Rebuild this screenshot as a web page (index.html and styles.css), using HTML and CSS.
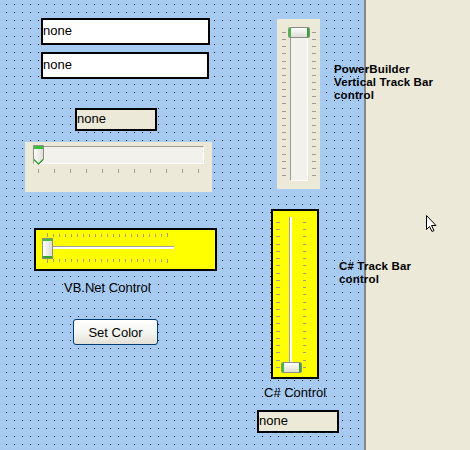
FILE: index.html
```html
<!DOCTYPE html>
<html lang="en">
<head>
  <meta charset="UTF-8" />
  <title>Track Bar controls</title>
  <link rel="stylesheet" href="styles.css">
</head>
<body>
  <div class="canvas">
    <div class="col-left">
      <div class="field field-one">none</div>
      <div class="field field-two">none</div>
      <div class="static static-top">none</div>

      <!-- PowerBuilder horizontal track bar -->
      <div class="pb-hbar">
        <svg width="187" height="50" viewBox="0 0 187 50">
          <defs>
            <linearGradient id="hthumb" x1="0" x2="1" y1="0" y2="0">
              <stop offset="0" stop-color="#ffffff"/>
              <stop offset="1" stop-color="#dcdbd3"/>
            </linearGradient>
          </defs>
          <rect x="8.5" y="4.5" width="170" height="17" fill="#f2f1eb" stroke="#ffffff"/>
          <path d="M8.5 21.5V4.5H178.5" fill="none" stroke="#9d9c94"/>
          <path d="M13.5 27v4M29.5 27v4M45.5 27v4M61.5 27v4M77.5 27v4M93.5 27v4M109.5 27v4M125.5 27v4M141.5 27v4M157.5 27v4M173.5 27v4" stroke="#9d9c94"/>
          <path d="M8.5 3.5h10v14l-5 5-5-5z" fill="url(#hthumb)" stroke="#8c8d88"/>
          <rect x="9" y="4" width="9" height="3" fill="#3cbf3c"/>
          <path d="M9 17.5l4.5 4.5 4.5-4.5" fill="none" stroke="#2fa52f" stroke-width="1.2"/>
        </svg>
      </div>

      <!-- VB.Net track bar -->
      <div class="vb-bar">
        <svg width="179" height="39" viewBox="0 0 179 39">
          <defs>
            <linearGradient id="vbthumb" x1="0" x2="1" y1="0" y2="0">
              <stop offset="0" stop-color="#ffffff"/>
              <stop offset="1" stop-color="#dcdbd3"/>
            </linearGradient>
          </defs>
          <path d="M11 16.5H138" stroke="#a0a0a0"/>
          <rect x="11" y="17" width="127" height="2" fill="#ffffff"/>
          <g stroke="#a09f8c">
            <path d="M11.5 3v4M131.5 3v4M11.5 29v4M131.5 29v4"/>
            <path d="M17.5 4v3M23.5 4v3M29.5 4v3M35.5 4v3M41.5 4v3M47.5 4v3M53.5 4v3M59.5 4v3M65.5 4v3M71.5 4v3M77.5 4v3M83.5 4v3M89.5 4v3M95.5 4v3M101.5 4v3M107.5 4v3M113.5 4v3M119.5 4v3M125.5 4v3"/>
            <path d="M17.5 29v3M23.5 29v3M29.5 29v3M35.5 29v3M41.5 29v3M47.5 29v3M53.5 29v3M59.5 29v3M65.5 29v3M71.5 29v3M77.5 29v3M83.5 29v3M89.5 29v3M95.5 29v3M101.5 29v3M107.5 29v3M113.5 29v3M119.5 29v3M125.5 29v3"/>
          </g>
          <rect x="6.5" y="8.5" width="10" height="20" fill="url(#vbthumb)" stroke="#8c8d88"/>
          <rect x="7" y="9" width="9" height="2" fill="#3cbf3c"/>
          <rect x="7" y="26" width="9" height="2" fill="#2fa52f"/>
        </svg>
      </div>
      <div class="caption caption-vb">VB.Net Control</div>

      <button class="xp-button">Set Color</button>
    </div>

    <div class="col-right">
      <div class="row row-pb">
        <!-- PowerBuilder vertical track bar -->
        <div class="pb-vbar">
          <svg width="43" height="170" viewBox="0 0 43 170">
            <defs>
              <linearGradient id="pbthumb" x1="0" x2="0" y1="0" y2="1">
                <stop offset="0" stop-color="#ffffff"/>
                <stop offset="1" stop-color="#dcdbd3"/>
              </linearGradient>
            </defs>
            <rect x="13.5" y="9.5" width="17" height="152" fill="#f2f1eb" stroke="#ffffff"/>
            <path d="M13.5 161.5V9.5H30.5" fill="none" stroke="#9d9c94"/>
            <path stroke="#9d9c94" d="M5 13.5h4M5 20.5h4M5 27.5h4M5 34.5h4M5 42.5h4M5 49.5h4M5 56.5h4M5 63.5h4M5 70.5h4M5 77.5h4M5 84.5h4M5 92.5h4M5 99.5h4M5 106.5h4M5 113.5h4M5 120.5h4M5 127.5h4M5 135.5h4M5 142.5h4M5 149.5h4M5 156.5h4"/>
            <path stroke="#9d9c94" d="M35 13.5h4M35 20.5h4M35 27.5h4M35 34.5h4M35 42.5h4M35 49.5h4M35 56.5h4M35 63.5h4M35 70.5h4M35 77.5h4M35 84.5h4M35 92.5h4M35 99.5h4M35 106.5h4M35 113.5h4M35 120.5h4M35 127.5h4M35 135.5h4M35 142.5h4M35 149.5h4M35 156.5h4"/>
            <rect x="11.5" y="8.5" width="21" height="10" rx="1" fill="url(#pbthumb)" stroke="#8c8d88"/>
            <rect x="12" y="9" width="2" height="9" fill="#3cbf3c"/>
            <rect x="30" y="9" width="2" height="9" fill="#2fa52f"/>
          </svg>
        </div>
        <div class="note note-pb">PowerBuilder<br>Vertical Track Bar<br>control</div>
      </div>

      <div class="row row-cs">
        <!-- C# track bar -->
        <div class="cs-bar">
          <svg width="44" height="166" viewBox="0 0 44 166">
            <defs>
              <linearGradient id="csthumb" x1="0" x2="0" y1="0" y2="1">
                <stop offset="0" stop-color="#ffffff"/>
                <stop offset="1" stop-color="#dcdbd3"/>
              </linearGradient>
            </defs>
            <path d="M16.5 6V154" stroke="#a0a0a0"/>
            <rect x="17" y="6" width="2" height="148" fill="#ffffff"/>
            <path stroke="#a09f8c" d="M3 11.5h4M3 18.5h4M3 25.5h4M3 33.5h4M3 40.5h4M3 47.5h4M3 54.5h4M3 62.5h4M3 69.5h4M3 76.5h4M3 83.5h4M3 91.5h4M3 98.5h4M3 105.5h4M3 112.5h4M3 120.5h4M3 127.5h4M3 134.5h4M3 141.5h4M3 149.5h4M3 156.5h4"/>
            <path stroke="#a09f8c" d="M30 11.5h3M30 18.5h3M30 25.5h3M30 33.5h3M30 40.5h3M30 47.5h3M30 54.5h3M30 62.5h3M30 69.5h3M30 76.5h3M30 83.5h3M30 91.5h3M30 98.5h3M30 105.5h3M30 112.5h3M30 120.5h3M30 127.5h3M30 134.5h3M30 141.5h3M30 149.5h3M30 156.5h3"/>
            <rect x="8.5" y="151.5" width="20" height="10" rx="1" fill="url(#csthumb)" stroke="#8c8d88"/>
            <rect x="9" y="152" width="2" height="9" fill="#3cbf3c"/>
            <rect x="26" y="152" width="2" height="9" fill="#2fa52f"/>
          </svg>
        </div>
        <div class="note note-cs">C# Track Bar<br>control</div>
      </div>
      <div class="caption caption-cs">C# Control</div>
      <div class="static static-bottom">none</div>
    </div>
  </div>

  <svg class="pointer" width="12" height="18" viewBox="0 0 12 18">
    <path d="M0.5 0.5V14.5L3.5 11.5L6 16.5L8 15.5L5.5 10.5H10Z" fill="#ffffff" stroke="#000000" stroke-linejoin="miter"/>
  </svg>
</body>
</html>
```

FILE: styles.css
```css
body {
  margin: 0;
  width: 470px;
  height: 450px;
  overflow: hidden;
  position: relative;
  background-color: #ece9d8;
  font-family: "Liberation Sans", Arial, sans-serif;
  font-size: 13px;
  color: #000;
}

/* design surface with the 8px dot grid */
.canvas {
  display: flex;
  width: 364px;
  height: 450px;
  border-right: 2px solid #878787;
  background-color: #a6caf0;
  background-image: conic-gradient(at 1px 1px, transparent 75%, #000 0);
  background-size: 8px 8px;
  background-position: 6px 4px;
}

.col-left {
  flex: none;
  width: 240px;
  display: flex;
  flex-direction: column;
  align-items: flex-start;
}

.col-right {
  flex: none;
  margin-left: 17px;
  display: flex;
  flex-direction: column;
  align-items: flex-start;
}

.row {
  display: flex;
  align-items: flex-start;
}

.field,
.static {
  box-sizing: border-box;
  border: 2px solid #000;
  display: flex;
  align-items: center;
  padding: 0 0 2px 0;
  line-height: 15px;
}

.field {
  background-color: #fff;
  height: 27px;
}

.field-one {
  width: 169px;
  margin: 18px 0 0 41px;
}

.field-two {
  width: 168px;
  margin: 7px 0 0 41px;
}

.static {
  background-color: #ece9d8;
  width: 82px;
  height: 23px;
}

.static-top {
  margin: 29px 0 0 75px;
}

.static-bottom {
  margin-top: 9px;
}

.pb-hbar {
  width: 187px;
  height: 50px;
  margin: 11px 0 0 25px;
  background-color: #ece9d8;
}

.pb-vbar {
  width: 43px;
  height: 170px;
  margin-left: 20px;
  background-color: #ece9d8;
}

.pb-hbar svg,
.pb-vbar svg,
.vb-bar svg,
.cs-bar svg {
  display: block;
}

.vb-bar,
.cs-bar {
  border: 2px solid #000;
  background-color: #ffff00;
}

.vb-bar {
  width: 179px;
  height: 39px;
  margin: 36px 0 0 34px;
}

.cs-bar {
  width: 44px;
  height: 166px;
  margin-left: 14px;
}

.caption {
  line-height: 16px;
  white-space: nowrap;
}

.caption-vb {
  margin: 9px 0 0 64px;
}

.caption-cs {
  margin: 6px 0 0 7px;
}

.note {
  font-size: 11.5px;
  font-weight: bold;
  line-height: 13px;
  white-space: nowrap;
  letter-spacing: 0.15px;
}

.row-pb {
  margin-top: 19px;
}

.note-pb {
  margin: 44px 0 0 14px;
}

.row-cs {
  margin-top: 20px;
}

.note-cs {
  margin: 51px 0 0 20px;
}

.xp-button {
  width: 85px;
  height: 26px;
  margin: 23px 0 0 73px;
  padding: 0;
  border: 1px solid #003c74;
  border-radius: 3px;
  background: linear-gradient(#ffffff, #f4f4f0 55%, #e2e0d6);
  font-family: "Liberation Sans", Arial, sans-serif;
  font-size: 13px;
  color: #000;
}

.pointer {
  position: absolute;
  left: 426px;
  top: 215px;
}
```
